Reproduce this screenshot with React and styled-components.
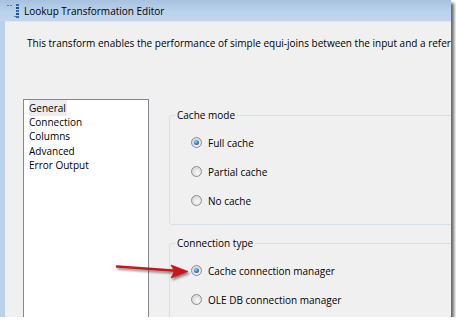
import React from "react";
import styled, { createGlobalStyle } from "styled-components";

const Global = createGlobalStyle`
  html, body { margin: 0; padding: 0; background: #ffffff; }
  body { font-family: "Open Sans", "Noto Sans", sans-serif; font-size: 10px; color: #000; }
`;

const Window = styled.div`
  position: relative;
  width: 451px;
  height: 317px;
  overflow: hidden;
  display: flex;
  flex-direction: column;
  background: #b9d1ea;
  box-shadow: 3px 3px 3px rgba(0, 0, 0, 0.6);
`;

const TitleBar = styled.div`
  height: 21px;
  flex: none;
  display: flex;
  align-items: center;
  padding-left: 7px;
  gap: 4px;
  background: linear-gradient(#a7c1de, #bcd3ec 60%, #c2d7ee);
`;

const Title = styled.span`
  font-size: 10px;
  line-height: 14px;
  color: #000;
  white-space: nowrap;
`;

const ClientArea = styled.div`
  flex: 1;
  margin-left: 5px;
  border-top: 1px solid #dfe8f2;
  background: #f0f0f0;
  padding: 14px 0 0 18px;
  min-width: 0;
`;

const Description = styled.div`
  padding-left: 4px;
  line-height: 14px;
  white-space: nowrap;
`;

const Main = styled.div`
  display: flex;
  align-items: flex-start;
  margin-top: 49px;
`;

const PageList = styled.ul`
  list-style: none;
  margin: 0;
  padding: 1px 0 0 5px;
  width: 119px;
  height: 240px;
  flex: none;
  background: #fff;
  border: 1px solid #828790;
`;

const PageItem = styled.li`
  line-height: 14.2px;
  height: 14.2px;
  white-space: nowrap;
  span {
    padding: 1px 1px 1px 0;
    background: ${(p) => (p.$selected ? "#ececec" : "transparent")};
  }
`;

const Settings = styled.div`
  margin-left: 20px;
  padding-top: 9px;
  display: flex;
  flex-direction: column;
  gap: 11px;
`;

const GroupBox = styled.fieldset`
  margin: 0;
  padding: 0 0 9px 0;
  width: 320px;
  border: 1px solid #d5dfe5;
  border-radius: 3px;
  min-inline-size: 0;
`;

const Legend = styled.legend`
  margin-left: 5px;
  padding: 0 2px;
  line-height: 14px;
  font-size: 10px;
`;

const Options = styled.div`
  padding: 6px 0 0 21px;
`;

const OptionRow = styled.label`
  display: flex;
  align-items: center;
  gap: 6px;
  height: 29px;
  white-space: nowrap;
`;

const Radio = styled.span`
  position: relative;
  width: 9px;
  height: 9px;
  flex: none;
  border-radius: 50%;
  border: 1px solid #8a8c8e;
  background: radial-gradient(circle at 60% 65%, #fafafa, #dadada 70%, #cbcbcb);
  &::after {
    content: "";
    display: ${(p) => (p.$checked ? "block" : "none")};
    position: absolute;
    left: 2px;
    top: 2px;
    width: 5px;
    height: 5px;
    border-radius: 50%;
    background: radial-gradient(circle at 40% 35%, #8fd6f7, #2a7cb8 55%, #123f6a);
  }
`;

const ArrowSvg = styled.svg`
  position: absolute;
  left: 110px;
  top: 255px;
  overflow: visible;
`;

function AppIcon() {
  return (
    <svg width="13" height="14" viewBox="0 0 13 14">
      <rect x="0" y="1" width="2" height="1" fill="#6a7a8c" />
      <rect x="3" y="1" width="2" height="1" fill="#6a7a8c" />
      <rect x="9" y="0" width="3" height="2" fill="#2c6fb8" />
      <rect x="9" y="3" width="3" height="2" fill="#1f4f85" />
      <rect x="9" y="6" width="3" height="2" fill="#2c6fb8" />
      <rect x="9" y="9" width="3" height="2" fill="#1f4f85" />
      <rect x="9" y="12" width="3" height="2" fill="#2c6fb8" />
      <rect x="7" y="12" width="2" height="1" fill="#6a7a8c" />
    </svg>
  );
}

function Option({ checked, children }) {
  return (
    <OptionRow>
      <Radio $checked={checked} />
      {children}
    </OptionRow>
  );
}

const pages = ["General", "Connection", "Columns", "Advanced", "Error Output"];

export default function App() {
  return (
    <>
      <Global />
      <Window>
        <TitleBar>
          <AppIcon />
          <Title>Lookup Transformation Editor</Title>
        </TitleBar>
        <ClientArea>
          <Description>
            This transform enables the performance of simple equi-joins between the input and a reference dataset.
          </Description>
          <Main>
            <PageList>
              {pages.map((p, i) => (
                <PageItem key={p} $selected={i === 0}>
                  <span>{p}</span>
                </PageItem>
              ))}
            </PageList>
            <Settings>
              <GroupBox>
                <Legend>Cache mode</Legend>
                <Options>
                  <Option checked>Full cache</Option>
                  <Option>Partial cache</Option>
                  <Option>No cache</Option>
                </Options>
              </GroupBox>
              <GroupBox>
                <Legend>Connection type</Legend>
                <Options>
                  <Option checked>Cache connection manager</Option>
                  <Option>OLE DB connection manager</Option>
                </Options>
              </GroupBox>
            </Settings>
          </Main>
        </ClientArea>
        <ArrowSvg width="85" height="30" viewBox="0 0 85 30">
          <defs>
            <filter id="arrowShadow" x="-20%" y="-50%" width="140%" height="200%">
              <feDropShadow dx="1.5" dy="2" stdDeviation="1.2" floodColor="#000" floodOpacity="0.45" />
            </filter>
          </defs>
          <g filter="url(#arrowShadow)" fill="#c8161d" stroke="#c8161d">
            <line x1="7" y1="11.5" x2="66" y2="15.7" strokeWidth="2.4" strokeLinecap="round" />
            <polygon points="78,16.5 61,10 64.5,16 61,23" strokeWidth="0.8" strokeLinejoin="round" />
          </g>
        </ArrowSvg>
      </Window>
    </>
  );
}
